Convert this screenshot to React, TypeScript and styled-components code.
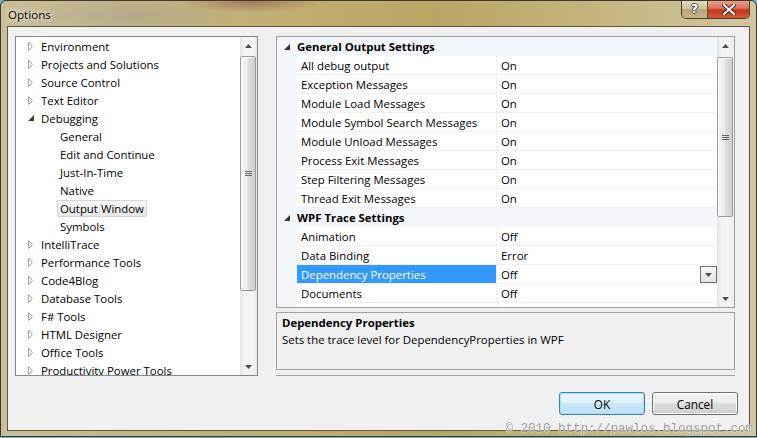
import React from 'react';
import styled, { createGlobalStyle } from 'styled-components';

const GlobalStyle = createGlobalStyle`
  html, body {
    margin: 0;
    padding: 0;
    background: #5cb6e0;
  }
  body {
    font-family: "Open Sans", "Noto Sans", sans-serif;
    font-size: 11.4px;
    color: #000;
  }
`;

const Window = styled.div`
  position: relative;
  width: 757px;
  height: 437px;
  box-sizing: border-box;
  display: flex;
  flex-direction: column;
  border: 1px solid #3f3826;
  border-radius: 6px 6px 0 0;
  overflow: hidden;
  background:
    radial-gradient(ellipse 70px 12px at 250px 0px, rgba(140, 70, 70, 0.55), transparent),
    radial-gradient(ellipse 120px 20px at 130px 14px, rgba(150, 150, 150, 0.35), transparent),
    linear-gradient(90deg, #c9bf98 0%, #c4b582 18%, #c0ad6e 42%, #b8a665 58%, #c5b67f 80%, #d1c69e 100%);
`;

const TitleBar = styled.div`
  height: 25px;
  display: flex;
  align-items: flex-start;
  padding-left: 7px;
  flex-shrink: 0;
`;

const TitleText = styled.div`
  font-size: 11.6px;
  line-height: 27px;
  color: #000;
  text-shadow: 0 0 6px rgba(255, 255, 255, 0.9), 0 0 3px rgba(255, 255, 255, 0.8);
`;

const CaptionButtons = styled.div`
  margin-left: auto;
  margin-right: 6px;
  margin-top: -1px;
  display: flex;
  height: 18px;
  border: 1px solid #4a3f2a;
  border-top: none;
  border-radius: 0 0 5px 5px;
  overflow: hidden;
`;

const CaptionButton = styled.div<{ $close?: boolean }>`
  width: ${p => (p.$close ? 41 : 25)}px;
  height: 100%;
  display: flex;
  align-items: center;
  justify-content: center;
  border-left: ${p => (p.$close ? '1px solid #5a4a34' : 'none')};
  background: ${p =>
    p.$close
      ? 'linear-gradient(#e9a595 0%, #d9735d 45%, #c23a1e 55%, #d2583b 100%)'
      : 'linear-gradient(#e4ddc3 0%, #cfc59e 45%, #b6a678 55%, #c2b58a 100%)'};
`;

const HelpGlyph = styled.span`
  font-family: "DejaVu Sans", sans-serif;
  font-weight: bold;
  font-size: 13px;
  line-height: 16px;
  color: #fff;
  text-shadow: -1px 0 #4a4a4a, 1px 0 #4a4a4a, 0 -1px #4a4a4a, 0 1px #4a4a4a;
`;

const Client = styled.div`
  flex: 1;
  margin: 0 6px 5px 6px;
  border: 1px solid #5d5740;
  background: #f0f0f0;
  display: flex;
  flex-direction: column;
  padding: 9px 11px 0 7px;
`;

const Main = styled.div`
  display: grid;
  grid-template-columns: 243px 459px;
  column-gap: 18px;
  height: 340px;
`;

const Tree = styled.div`
  box-sizing: border-box;
  border: 1px solid #828790;
  background: #fff;
  display: flex;
  overflow: hidden;
`;

const TreeList = styled.div`
  flex: 1;
  overflow: hidden;
`;

const TreeRow = styled.div<{ $level: number }>`
  height: 18px;
  display: flex;
  align-items: center;
  padding-left: ${p => (p.$level ? 41 : 12)}px;
  white-space: nowrap;
`;

const Expander = styled.div`
  width: 10px;
  height: 18px;
  display: flex;
  align-items: center;
`;

const TreeLabel = styled.div<{ $selected?: boolean }>`
  box-sizing: border-box;
  height: 17px;
  line-height: 15px;
  padding: 0 2px;
  border: 1px solid ${p => (p.$selected ? '#d4d4d4' : 'transparent')};
  border-radius: 2px;
  background: ${p => (p.$selected ? 'linear-gradient(#f9f9f9, #e6e6e6)' : 'none')};
`;

const ScrollBar = styled.div`
  width: 17px;
  display: flex;
  flex-direction: column;
  flex-shrink: 0;
  background: linear-gradient(90deg, #e3e3e3 0%, #f3f3f3 25%, #f5f5f5 70%, #ececec 100%);
`;

const ScrollArrow = styled.div`
  height: 17px;
  display: flex;
  align-items: center;
  justify-content: center;
  flex-shrink: 0;
`;

const ScrollTrack = styled.div`
  flex: 1;
  display: flex;
  flex-direction: column;
`;

const Thumb = styled.div<{ $offset: number; $size: number }>`
  box-sizing: border-box;
  margin: ${p => p.$offset}px 1px 0 0;
  height: ${p => p.$size}px;
  border: 1px solid #9b9b9b;
  border-radius: 2px;
  background: linear-gradient(90deg, #f5f5f5 0%, #ececec 45%, #dcdcdc 55%, #cfcfcf 100%);
  box-shadow: inset 1px 1px 0 #fff;
  display: flex;
  align-items: center;
  justify-content: center;
`;

const RightColumn = styled.div`
  display: flex;
  flex-direction: column;
`;

const Grid = styled.div`
  box-sizing: border-box;
  height: 272px;
  border: 1px solid #a0a0a0;
  background: #fff;
  display: flex;
  overflow: hidden;
`;

const GridBody = styled.div`
  flex: 1;
  overflow: hidden;
`;

const CategoryRow = styled.div`
  height: 19px;
  display: flex;
  align-items: center;
  background: #f3f6fb;
  font-weight: bold;
  white-space: nowrap;
`;

const Gutter = styled.div`
  width: 20px;
  height: 19px;
  flex-shrink: 0;
  display: flex;
  align-items: center;
  padding-left: 7px;
  box-sizing: border-box;
  background: #f3f6fb;
`;

const PropRow = styled.div`
  height: 19px;
  display: flex;
`;

const NameCell = styled.div<{ $selected?: boolean }>`
  box-sizing: border-box;
  width: 200px;
  padding: 1px 0 0 4px;
  line-height: 17px;
  border-bottom: 1px solid #f0f0f0;
  border-right: 1px solid #f0f0f0;
  background: ${p => (p.$selected ? '#3399ff' : '#fff')};
  color: ${p => (p.$selected ? '#fff' : '#000')};
  white-space: nowrap;
`;

const ValueCell = styled.div`
  box-sizing: border-box;
  flex: 1;
  display: flex;
  align-items: flex-start;
  padding: 1px 0 0 4px;
  line-height: 17px;
  border-bottom: 1px solid #f0f0f0;
`;

const DropButton = styled.div`
  box-sizing: border-box;
  margin-left: auto;
  width: 17px;
  height: 17px;
  border: 1px solid #6f6f6f;
  background: linear-gradient(#f7f7f7, #e2e2e2);
  display: flex;
  align-items: center;
  justify-content: center;
`;

const Description = styled.div`
  box-sizing: border-box;
  margin-top: 4px;
  height: 58px;
  border: 1px solid #a0a0a0;
  padding: 1px 5px;
`;

const DescTitle = styled.div`
  font-weight: bold;
  line-height: 17px;
`;

const DescText = styled.div`
  line-height: 17px;
`;

const Separator = styled.div`
  margin-top: 5px;
  height: 1px;
  background: #a0a0a0;
`;

const ButtonRow = styled.div`
  margin-top: 16px;
  display: flex;
  justify-content: flex-end;
  gap: 7px;
`;

const Button = styled.div<{ $default?: boolean }>`
  box-sizing: border-box;
  width: 86px;
  height: 23px;
  display: flex;
  align-items: center;
  justify-content: center;
  border-radius: 3px;
  font-size: 11.8px;
  border: 1px solid ${p => (p.$default ? '#3c7fb1' : '#707070')};
  box-shadow: ${p => (p.$default ? 'inset 0 0 0 1px #9ee2fb' : 'inset 0 0 0 1px #fcfcfc')};
  background: ${p =>
    p.$default
      ? 'linear-gradient(#eaf6fd 0%, #dff1fb 50%, #c9e7f8 50%, #bfe1f4 100%)'
      : 'linear-gradient(#f2f2f2 0%, #ebebeb 50%, #dddddd 50%, #cfcfcf 100%)'};
`;

const Watermark = styled.div`
  position: absolute;
  right: 3px;
  bottom: 0px;
  font-family: "Liberation Mono", "DejaVu Sans Mono", monospace;
  font-size: 12.5px;
  line-height: 13px;
  color: #9a9a9a;
  text-shadow: 0 0 2px #fff, 0 0 1px #fff;
  white-space: nowrap;
`;

const ClosedArrow = () => (
  <svg width="6" height="9" viewBox="0 0 6 9">
    <path d="M0.5 0.5 L4.5 4.5 L0.5 8.5 Z" fill="#fff" stroke="#a5a5a5" />
  </svg>
);

const OpenArrow = ({ color = '#3c3c3c' }: { color?: string }) => (
  <svg width="6" height="6" viewBox="0 0 6 6">
    <path d="M6 0 L6 6 L0 6 Z" fill={color} />
  </svg>
);

const SmallTriangle = ({ up }: { up?: boolean }) => (
  <svg width="7" height="4" viewBox="0 0 7 4">
    <path d={up ? 'M0 4 L3.5 0 L7 4 Z' : 'M0 0 L7 0 L3.5 4 Z'} fill="#4c4c4c" />
  </svg>
);

const Grip = () => (
  <svg width="7" height="7" viewBox="0 0 7 7">
    <path d="M0 1.5 H7 M0 3.5 H7 M0 5.5 H7" stroke="#666" strokeWidth="1" />
  </svg>
);

const CloseGlyph = () => (
  <svg width="14" height="11" viewBox="0 0 14 11">
    <path d="M2 1 L12 10 M12 1 L2 10" stroke="#4a2a20" strokeWidth="4" strokeLinecap="square" />
    <path d="M2 1 L12 10 M12 1 L2 10" stroke="#fff" strokeWidth="2" strokeLinecap="square" />
  </svg>
);

interface ScrollProps {
  offset: number;
  size: number;
}

const VScroll = ({ offset, size }: ScrollProps) => (
  <ScrollBar>
    <ScrollArrow>
      <SmallTriangle up />
    </ScrollArrow>
    <ScrollTrack>
      <Thumb $offset={offset} $size={size}>
        <Grip />
      </Thumb>
    </ScrollTrack>
    <ScrollArrow>
      <SmallTriangle />
    </ScrollArrow>
  </ScrollBar>
);

interface TreeItem {
  label: string;
  level: number;
  open?: boolean;
  selected?: boolean;
}

const treeItems: TreeItem[] = [
  { label: 'Environment', level: 0 },
  { label: 'Projects and Solutions', level: 0 },
  { label: 'Source Control', level: 0 },
  { label: 'Text Editor', level: 0 },
  { label: 'Debugging', level: 0, open: true },
  { label: 'General', level: 1 },
  { label: 'Edit and Continue', level: 1 },
  { label: 'Just-In-Time', level: 1 },
  { label: 'Native', level: 1 },
  { label: 'Output Window', level: 1, selected: true },
  { label: 'Symbols', level: 1 },
  { label: 'IntelliTrace', level: 0 },
  { label: 'Performance Tools', level: 0 },
  { label: 'Code4Blog', level: 0 },
  { label: 'Database Tools', level: 0 },
  { label: 'F# Tools', level: 0 },
  { label: 'HTML Designer', level: 0 },
  { label: 'Office Tools', level: 0 },
  { label: 'Productivity Power Tools', level: 0 },
];

interface Section {
  title: string;
  rows: [string, string][];
}

// the last WPF row only peeks in under the visible area, so it stays blank
const sections: Section[] = [
  {
    title: 'General Output Settings',
    rows: [
      ['All debug output', 'On'],
      ['Exception Messages', 'On'],
      ['Module Load Messages', 'On'],
      ['Module Symbol Search Messages', 'On'],
      ['Module Unload Messages', 'On'],
      ['Process Exit Messages', 'On'],
      ['Step Filtering Messages', 'On'],
      ['Thread Exit Messages', 'On'],
    ],
  },
  {
    title: 'WPF Trace Settings',
    rows: [
      ['Animation', 'Off'],
      ['Data Binding', 'Error'],
      ['Dependency Properties', 'Off'],
      ['Documents', 'Off'],
      ['', ''],
    ],
  },
];

const selectedProp = 'Dependency Properties';

const App = () => (
  <>
    <GlobalStyle />
    <Window>
      <TitleBar>
        <TitleText>Options</TitleText>
        <CaptionButtons>
          <CaptionButton>
            <HelpGlyph>?</HelpGlyph>
          </CaptionButton>
          <CaptionButton $close>
            <CloseGlyph />
          </CaptionButton>
        </CaptionButtons>
      </TitleBar>
      <Client>
        <Main>
          <Tree>
            <TreeList>
              {treeItems.map(item => (
                <TreeRow key={item.label} $level={item.level}>
                  {item.level === 0 && (
                    <Expander>{item.open ? <OpenArrow /> : <ClosedArrow />}</Expander>
                  )}
                  <TreeLabel $selected={item.selected}>{item.label}</TreeLabel>
                </TreeRow>
              ))}
            </TreeList>
            <VScroll offset={2} size={235} />
          </Tree>
          <RightColumn>
            <Grid>
              <GridBody>
                {sections.map(section => (
                  <React.Fragment key={section.title}>
                    <CategoryRow>
                      <Gutter>
                        <OpenArrow color="#333" />
                      </Gutter>
                      {section.title}
                    </CategoryRow>
                    {section.rows.map(([name, value], i) => (
                      <PropRow key={name || i}>
                        <Gutter />
                        <NameCell $selected={name === selectedProp}>{name}</NameCell>
                        <ValueCell>
                          {value}
                          {name === selectedProp && (
                            <DropButton>
                              <SmallTriangle />
                            </DropButton>
                          )}
                        </ValueCell>
                      </PropRow>
                    ))}
                  </React.Fragment>
                ))}
              </GridBody>
              <VScroll offset={3} size={160} />
            </Grid>
            <Description>
              <DescTitle>Dependency Properties</DescTitle>
              <DescText>Sets the trace level for DependencyProperties in WPF</DescText>
            </Description>
            <Separator />
          </RightColumn>
        </Main>
        <ButtonRow>
          <Button $default>OK</Button>
          <Button>Cancel</Button>
        </ButtonRow>
      </Client>
      <Watermark>© 2010 http://pawlos.blogspot.com</Watermark>
    </Window>
  </>
);

export default App;
